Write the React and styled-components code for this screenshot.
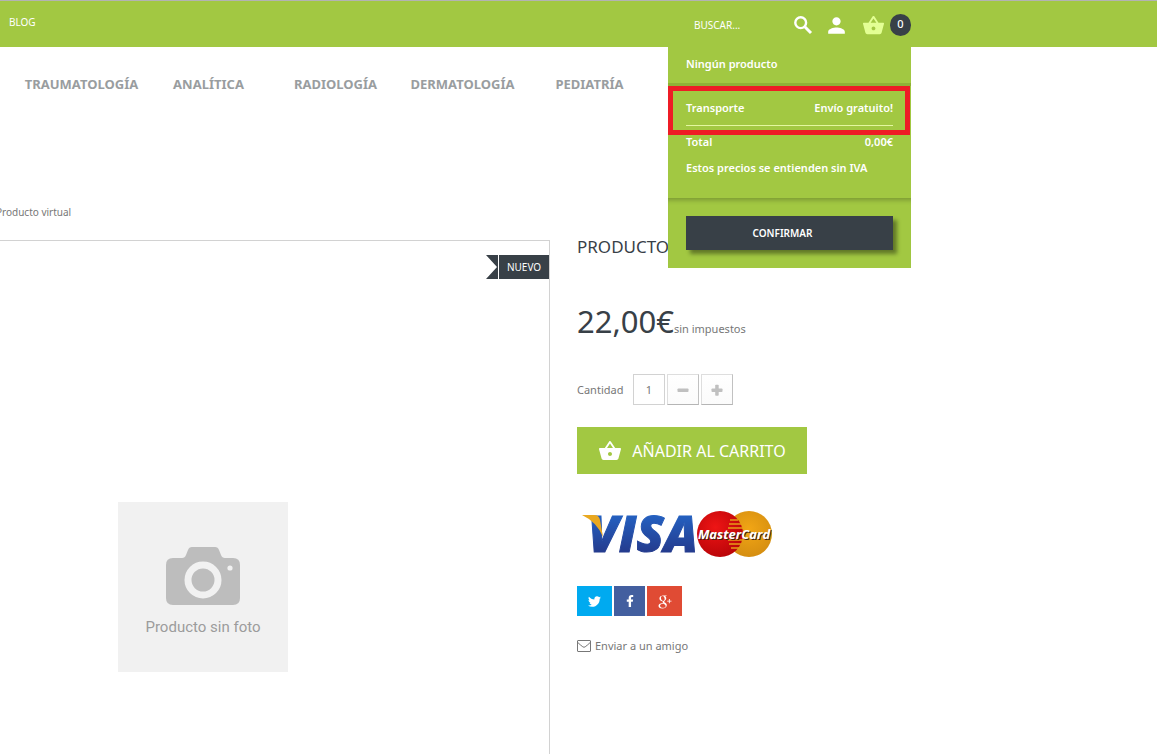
//ProductPage
import React, { useState } from "react";
import styled, { createGlobalStyle } from "styled-components";
import { MdPerson, MdShoppingBasket } from "react-icons/md";
import { FaTwitter, FaFacebookF } from "react-icons/fa";
import { TiSocialGooglePlus } from "react-icons/ti";

const GREEN = "#a2c842";
const DARK = "#384047";
const GREY = "#777777";

const GlobalStyle = createGlobalStyle`
  * {
    box-sizing: border-box;
  }

  body {
    margin: 0;
    background: #ffffff;
    color: ${GREY};
    font-family: "Noto Sans", "Open Sans", sans-serif;
    font-size: 11px;
    line-height: 18px;
  }

  button,
  input {
    font-family: inherit;
  }

  a {
    color: inherit;
    text-decoration: none;
  }
`;

const Page = styled.div`
  display: flex;
  flex-direction: column;
  min-height: 100vh;
  overflow: hidden;
`;

const Header = styled.header`
  background: ${GREEN};
  border-top: 1px solid #b3b3b3;
  color: #ffffff;
`;

const HeaderInner = styled.div`
  display: flex;
  justify-content: space-between;
  height: 46px;
  margin-right: 246px;
  padding-left: 9px;
`;

const BlogLink = styled.a`
  align-self: flex-start;
  padding-top: 12px;
  font-size: 10px;
`;

const Tools = styled.div`
  display: flex;
  align-items: center;
  position: relative;
  width: 243px;
  padding: 2px 0 0 26px;
`;

const SearchForm = styled.form`
  display: flex;
  align-items: center;
  flex: 1;
`;

const SearchInput = styled.input`
  width: 97px;
  padding: 0;
  border: none;
  outline: none;
  background: transparent;
  color: #ffffff;
  font-size: 10px;

  &::placeholder {
    color: #ffffff;
    opacity: 1;
  }
`;

const IconButton = styled.button`
  display: flex;
  margin: 0;
  padding: 0;
  border: none;
  background: transparent;
  color: ${(props) => props.$color || "#ffffff"};
  cursor: pointer;
`;

const CartButton = styled(IconButton)`
  align-items: center;
  gap: 5px;
  margin-left: 13px;
`;

const Count = styled.span`
  width: 21px;
  height: 22px;
  border-radius: 11px;
  background: ${DARK};
  color: #ffffff;
  font-size: 11px;
  font-weight: 500;
  line-height: 20px;
  text-align: center;
`;

const CartPanel = styled.section`
  position: absolute;
  top: 46px;
  left: 0;
  right: 0;
  z-index: 2;
  background: ${GREEN};
  font-size: 11px;
  font-weight: 600;
`;

const CartEmpty = styled.p`
  margin: 0;
  padding: 8px 18px 10px;
`;

const CartPrices = styled.div`
  position: relative;
  padding: 7px 18px 21px;
  border-top: 3px solid #8fb137;
`;

const CartLine = styled.div`
  display: flex;
  justify-content: space-between;
  padding: ${(props) => (props.$divided ? "7px" : "6px")} 0 8px;
  border-top: ${(props) => (props.$divided ? "1px solid #e3f7a0" : "none")};
`;

const CartNote = styled.p`
  margin: 0;
`;

const Highlight = styled.div`
  position: absolute;
  top: 0;
  left: 0;
  right: 1px;
  height: 49px;
  border: 5px solid #ee1c25;
`;

const CartFooter = styled.div`
  padding: 18px;
  box-shadow: inset 0 6px 5px -4px rgba(0, 0, 0, 0.25);
`;

const ConfirmButton = styled.button`
  display: block;
  width: 100%;
  height: 34px;
  padding: 0 14px 0 0;
  border: none;
  background: ${DARK};
  box-shadow: 4px 4px 4px rgba(0, 0, 0, 0.4);
  color: #ffffff;
  font-size: 10px;
  font-weight: 600;
  cursor: pointer;
`;

const Nav = styled.nav`
  display: grid;
  grid-template-columns: repeat(5, 127px);
  margin-left: 18px;
  padding: 28px 0;
  color: #999d9f;
  font-size: 13px;
  font-weight: 700;
  text-align: center;
`;

const Breadcrumb = styled.div`
  margin: 82px 0 19px -4px;
  font-size: 10px;
`;

const Main = styled.main`
  display: grid;
  grid-template-columns: 550px minmax(0, 1fr);
  column-gap: 27px;
  flex: 1;
`;

const Gallery = styled.section`
  display: flex;
  flex-direction: column;
  border-top: 1px solid #d2d2d2;
  border-right: 1px solid #d2d2d2;
`;

const NewBadge = styled.div`
  display: flex;
  align-self: flex-end;
  gap: 1px;
  margin-top: 14px;
  color: #ffffff;
`;

const BadgeTail = styled.span`
  width: 12px;
  background: ${DARK};
  clip-path: polygon(0 0, 100% 0, 100% 100%, 0 100%, 11px 50%);
`;

const BadgeText = styled.span`
  width: 50px;
  background: ${DARK};
  font-size: 10px;
  line-height: 24px;
  text-align: center;
`;

const NoPhoto = styled.figure`
  display: flex;
  flex-direction: column;
  align-items: center;
  width: 170px;
  height: 170px;
  margin: 223px 0 0 118px;
  padding-top: 45px;
  background: #f1f1f1;
  color: #9c9c9c;
  font-family: Roboto, sans-serif;
  font-size: 15px;
`;

const NoPhotoText = styled.figcaption`
  margin-top: 13px;
`;

const Details = styled.section`
  display: flex;
  flex-direction: column;
  align-items: flex-start;
`;

const Title = styled.h1`
  margin: 0;
  color: ${DARK};
  font-size: 17px;
  font-weight: 400;
  line-height: 14px;
  white-space: nowrap;
`;

const PriceRow = styled.p`
  display: flex;
  align-items: baseline;
  margin: 48px 0 34px;
`;

const Price = styled.span`
  color: ${DARK};
  font-size: 31px;
  line-height: 38px;
`;

const QuantityRow = styled.div`
  display: flex;
  align-items: center;
  gap: 2px;
`;

const QuantityLabel = styled.label`
  width: 54px;
`;

const QuantityInput = styled.input`
  width: 32px;
  height: 31px;
  padding: 0;
  border: 1px solid #d2d2d2;
  color: ${GREY};
  font-size: 11px;
  text-align: center;
`;

const StepButton = styled.button`
  display: flex;
  align-items: center;
  justify-content: center;
  width: 32px;
  height: 31px;
  padding: 0;
  border: 1px solid;
  border-color: #dedede #c1c1c1 #b5b5b5 #dedede;
  background: linear-gradient(#ffffff, #fbfbfb);
  color: #c0c0c0;
  cursor: pointer;
`;

const AddButton = styled.button`
  display: flex;
  align-items: center;
  justify-content: center;
  gap: 10px;
  width: 230px;
  height: 47px;
  margin: 22px 0 35px;
  padding: 0;
  border: none;
  background: ${GREEN};
  color: #ffffff;
  font-size: 16px;
  cursor: pointer;
`;

const ShareRow = styled.div`
  display: flex;
  gap: 2px;
  margin: 25px 0 21px;
`;

const ShareButton = styled.button`
  display: flex;
  align-items: center;
  justify-content: center;
  width: ${(props) => props.$width}px;
  height: 30px;
  padding: 0;
  border: none;
  background: ${(props) => props.$color};
  color: #ffffff;
  cursor: pointer;
`;

const FriendLink = styled.a`
  display: flex;
  align-items: center;
  gap: 4px;
`;

const CATEGORIES = [
  "TRAUMATOLOGÍA",
  "ANALÍTICA",
  "RADIOLOGÍA",
  "DERMATOLOGÍA",
  "PEDIATRÍA",
];

const SearchIcon = () => (
  <svg width="24" height="24" viewBox="0 0 24 24" fill="none" stroke="currentColor" aria-hidden="true">
    <circle cx="9.7" cy="9.7" r="5.4" strokeWidth="2.4" />
    <path d="M13.8 13.8L20 20" strokeWidth="3" />
  </svg>
);

const MinusIcon = () => (
  <svg width="12" height="12" viewBox="0 0 12 12" aria-hidden="true">
    <rect x="0.5" y="4.5" width="11" height="3.5" rx="0.8" fill="currentColor" />
  </svg>
);

const PlusIcon = () => (
  <svg width="12" height="12" viewBox="0 0 12 12" aria-hidden="true">
    <rect x="0.5" y="4.5" width="11" height="3.5" rx="0.8" fill="currentColor" />
    <rect x="4.2" y="0.8" width="3.5" height="11" rx="0.8" fill="currentColor" />
  </svg>
);

const CameraIcon = () => (
  <svg width="74" height="58" viewBox="0 0 74 58" aria-hidden="true">
    <path
      d="M7 11H16Q19 11 20 8L22 3Q23 0 26 0H49Q52 0 53 3L55 8Q56 11 59 11H67Q74 11 74 18V51Q74 58 67 58H7Q0 58 0 51V18Q0 11 7 11Z"
      fill="#bdbdbd"
    />
    <circle cx="37" cy="33" r="15" fill="none" stroke="#f1f1f1" strokeWidth="7" />
    <circle cx="64" cy="21" r="2.6" fill="#f1f1f1" />
  </svg>
);

const EnvelopeIcon = () => (
  <svg width="14" height="12" viewBox="0 0 14 12" fill="none" stroke={GREY} aria-hidden="true">
    <rect x="0.5" y="0.5" width="13" height="11" rx="0.5" />
    <path d="M0.5 2.2C2 4 4.5 5.7 5.8 6.8Q7 7.7 8.2 6.8C9.5 5.7 12 4 13.5 2.2" />
  </svg>
);

const CardLogos = () => (
  <svg width="200" height="52" viewBox="0 0 200 52" role="img" aria-label="VISA MasterCard">
    <defs>
      <linearGradient id="visa" x1="0" y1="0" x2="0" y2="1">
        <stop offset="0.2" stopColor="#2463c4" />
        <stop offset="0.8" stopColor="#243a8c" />
      </linearGradient>
      <radialGradient id="red" cx="0.4" cy="0.35" r="0.7">
        <stop offset="0" stopColor="#ee1515" />
        <stop offset="1" stopColor="#b80408" />
      </radialGradient>
      <radialGradient id="amber" cx="0.5" cy="0.4" r="0.7">
        <stop offset="0" stopColor="#f2a615" />
        <stop offset="1" stopColor="#d08a10" />
      </radialGradient>
    </defs>
    <text
      x="11"
      y="43"
      fill="url(#visa)"
      stroke="url(#visa)"
      strokeWidth="1"
      fontFamily="Open Sans"
      fontSize="50"
      fontStyle="italic"
      fontWeight="800"
    >
      VISA
    </text>
    <path d="M5 6H17Q22 6 23 11L26 28Q20 13 5 6Z" fill="#e9a820" />
    <circle cx="172" cy="25" r="23" fill="url(#amber)" />
    <circle cx="143" cy="25" r="23" fill="url(#red)" />
    <path
      d="M153 11H161M152 15H164M151 19H166M151 31H166M152 35H164M154 39H162"
      stroke="#e79a18"
      strokeWidth="1.6"
    />
    <g fontFamily="Open Sans" fontSize="13" fontStyle="italic" fontWeight="700" textAnchor="middle">
      <text x="158" y="31" fill="#40220f">
        MasterCard
      </text>
      <text x="157" y="30" fill="#ffffff">
        MasterCard
      </text>
    </g>
  </svg>
);

const Cart = () => (
  <CartPanel>
    <CartEmpty>Ningún producto</CartEmpty>
    <CartPrices>
      <CartLine>
        <span>Transporte</span>
        <span>Envío gratuito!</span>
      </CartLine>
      <CartLine $divided>
        <span>Total</span>
        <span>0,00€</span>
      </CartLine>
      <CartNote>Estos precios se entienden sin IVA</CartNote>
      <Highlight />
    </CartPrices>
    <CartFooter>
      <ConfirmButton type="button">CONFIRMAR</ConfirmButton>
    </CartFooter>
  </CartPanel>
);

const App = () => {
  const [quantity, setQuantity] = useState(1);

  return (
    <Page>
      <GlobalStyle />
      <Header>
        <HeaderInner>
          <BlogLink href="#blog">BLOG</BlogLink>
          <Tools>
            <SearchForm onSubmit={(e) => e.preventDefault()}>
              <SearchInput type="text" placeholder="BUSCAR..." aria-label="Buscar" />
              <IconButton type="submit" aria-label="Buscar">
                <SearchIcon />
              </IconButton>
            </SearchForm>
            <IconButton type="button" aria-label="Mi cuenta">
              <MdPerson size={25} />
            </IconButton>
            <CartButton type="button" aria-label="Carrito" $color="#e3ff94">
              <MdShoppingBasket size={23} />
              <Count>0</Count>
            </CartButton>
            <Cart />
          </Tools>
        </HeaderInner>
      </Header>
      <Nav>
        {CATEGORIES.map((category) => (
          <a key={category} href="#categoria">
            {category}
          </a>
        ))}
      </Nav>
      <Breadcrumb>Producto virtual</Breadcrumb>
      <Main>
        <Gallery>
          <NewBadge>
            <BadgeTail />
            <BadgeText>NUEVO</BadgeText>
          </NewBadge>
          <NoPhoto>
            <CameraIcon />
            <NoPhotoText>Producto sin foto</NoPhotoText>
          </NoPhoto>
        </Gallery>
        <Details>
          <Title>PRODUCTO</Title>
          <PriceRow>
            <Price>22,00€</Price>
            <span>sin impuestos</span>
          </PriceRow>
          <QuantityRow>
            <QuantityLabel htmlFor="quantity">Cantidad</QuantityLabel>
            <QuantityInput
              id="quantity"
              type="text"
              value={quantity}
              onChange={(e) => setQuantity(Number(e.target.value) || 1)}
            />
            <StepButton
              type="button"
              aria-label="Menos"
              onClick={() => setQuantity(Math.max(1, quantity - 1))}
            >
              <MinusIcon />
            </StepButton>
            <StepButton type="button" aria-label="Más" onClick={() => setQuantity(quantity + 1)}>
              <PlusIcon />
            </StepButton>
          </QuantityRow>
          <AddButton type="button">
            <MdShoppingBasket size={24} />
            AÑADIR AL CARRITO
          </AddButton>
          <CardLogos />
          <ShareRow>
            <ShareButton type="button" aria-label="Twitter" $width={35} $color="#00aaf0">
              <FaTwitter size={13} />
            </ShareButton>
            <ShareButton type="button" aria-label="Facebook" $width={31} $color="#435f9f">
              <FaFacebookF size={12} />
            </ShareButton>
            <ShareButton type="button" aria-label="Google+" $width={35} $color="#e04b34">
              <TiSocialGooglePlus size={21} />
            </ShareButton>
          </ShareRow>
          <FriendLink href="#amigo">
            <EnvelopeIcon />
            Enviar a un amigo
          </FriendLink>
        </Details>
      </Main>
    </Page>
  );
};

export default App;
